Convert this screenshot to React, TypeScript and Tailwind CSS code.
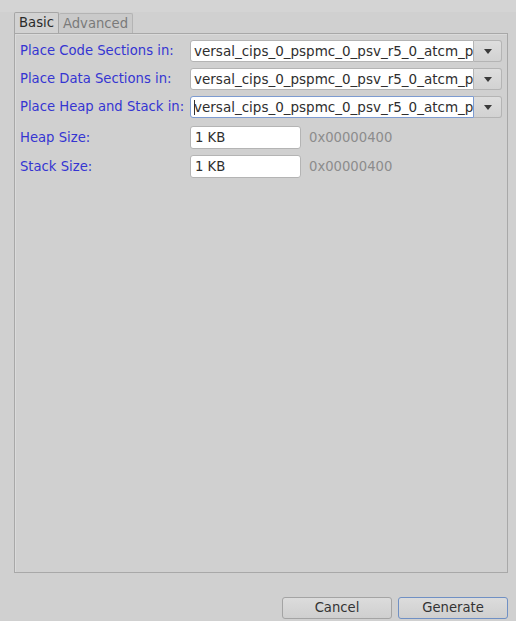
import React from "react";

const font = { fontFamily: '"DejaVu Sans", "Liberation Sans", sans-serif' };

function Combo({ focused }: { focused?: boolean }) {
  return (
    <div className="flex h-[22px] w-[312px]">
      <div
        className={
          "flex h-full w-[284px] items-center overflow-hidden whitespace-nowrap rounded-l-[3px] border bg-white pl-[3px] text-[13.5px] text-[#2e2e2e] " +
          (focused ? "border-[#7d9bd0]" : "border-[#b4b4b4]")
        }
      >
        {focused && <span className="mr-[-1px] inline-block h-[15px] w-px shrink-0 bg-[#333]" />}
        <span>versal_cips_0_pspmc_0_psv_r5_0_atcm_p</span>
      </div>
      <div className="flex h-full w-[28px] items-center justify-center rounded-r-[3px] border border-l-0 border-[#b4b4b4] bg-gradient-to-b from-[#dedede] to-[#d2d2d2]">
        <svg width="8" height="5" viewBox="0 0 8 5">
          <path d="M0 0 L8 0 L4 5 Z" fill="#3a3a3a" />
        </svg>
      </div>
    </div>
  );
}

function SizeRow({ label }: { label: string }) {
  return (
    <div className="flex h-[23px] items-center">
      <div className="w-[170px] text-[13.2px] text-[#3535d2]">{label}</div>
      <div className="flex h-full w-[111px] items-center rounded-[3px] border border-[#b4b4b4] bg-white pl-[4px] text-[13.2px] text-[#2e2e2e]">
        1 KB
      </div>
      <div className="ml-[8px] text-[13.2px] text-[#8c8c8c]">0x00000400</div>
    </div>
  );
}

function ComboRow({ label, focused }: { label: string; focused?: boolean }) {
  return (
    <div className="flex h-[22px] items-center">
      <div className="w-[170px] whitespace-nowrap text-[13.2px] text-[#3535d2]">{label}</div>
      <Combo focused={focused} />
    </div>
  );
}

export default function App() {
  return (
    <div style={font} className="flex h-[621px] w-[516px] flex-col bg-[#d0d0d0]">
      <div className="h-[12px] bg-[#d4d4d4]" />
      <div className="flex pl-[14px]">
        <div className="flex h-[21px] items-center rounded-t-[2px] border border-b-0 border-[#a6a6a6] bg-[#d2d2d2] px-[4px] text-[13.2px] text-[#2a2a2a]">
          Basic
        </div>
        <div className="mt-[1px] flex h-[20px] items-center rounded-t-[2px] border border-b-0 border-l-0 border-[#b4b4b4] bg-[#cacaca] px-[4px] text-[13.2px] text-[#7a7a7a]">
          Advanced
        </div>
      </div>
      <div className="mx-[14px] flex h-[540px] w-[494px] flex-col border border-[#a8a8a8] bg-[#d0d0d0] pl-[5px] pt-[6px] shadow-[inset_1px_1px_0_#dadada]">
        <ComboRow label="Place Code Sections in:" />
        <div className="h-[6px]" />
        <ComboRow label="Place Data Sections in:" />
        <div className="h-[6px]" />
        <ComboRow label="Place Heap and Stack in:" focused />
        <div className="h-[8px]" />
        <SizeRow label="Heap Size:" />
        <div className="h-[6px]" />
        <SizeRow label="Stack Size:" />
      </div>
      <div className="flex justify-end gap-[6px] pr-[8px] pt-[24px]">
        <button className="flex h-[22px] w-[110px] items-center justify-center rounded-[3px] border border-[#a4a4a4] bg-gradient-to-b from-[#dcdcdc] to-[#cfcfcf] text-[13.2px] text-[#333]">
          Cancel
        </button>
        <button className="flex h-[22px] w-[110px] items-center justify-center rounded-[3px] border border-[#7090c4] bg-gradient-to-b from-[#dcdcdc] to-[#cfcfcf] text-[13.2px] text-[#333]">
          Generate
        </button>
      </div>
    </div>
  );
}
